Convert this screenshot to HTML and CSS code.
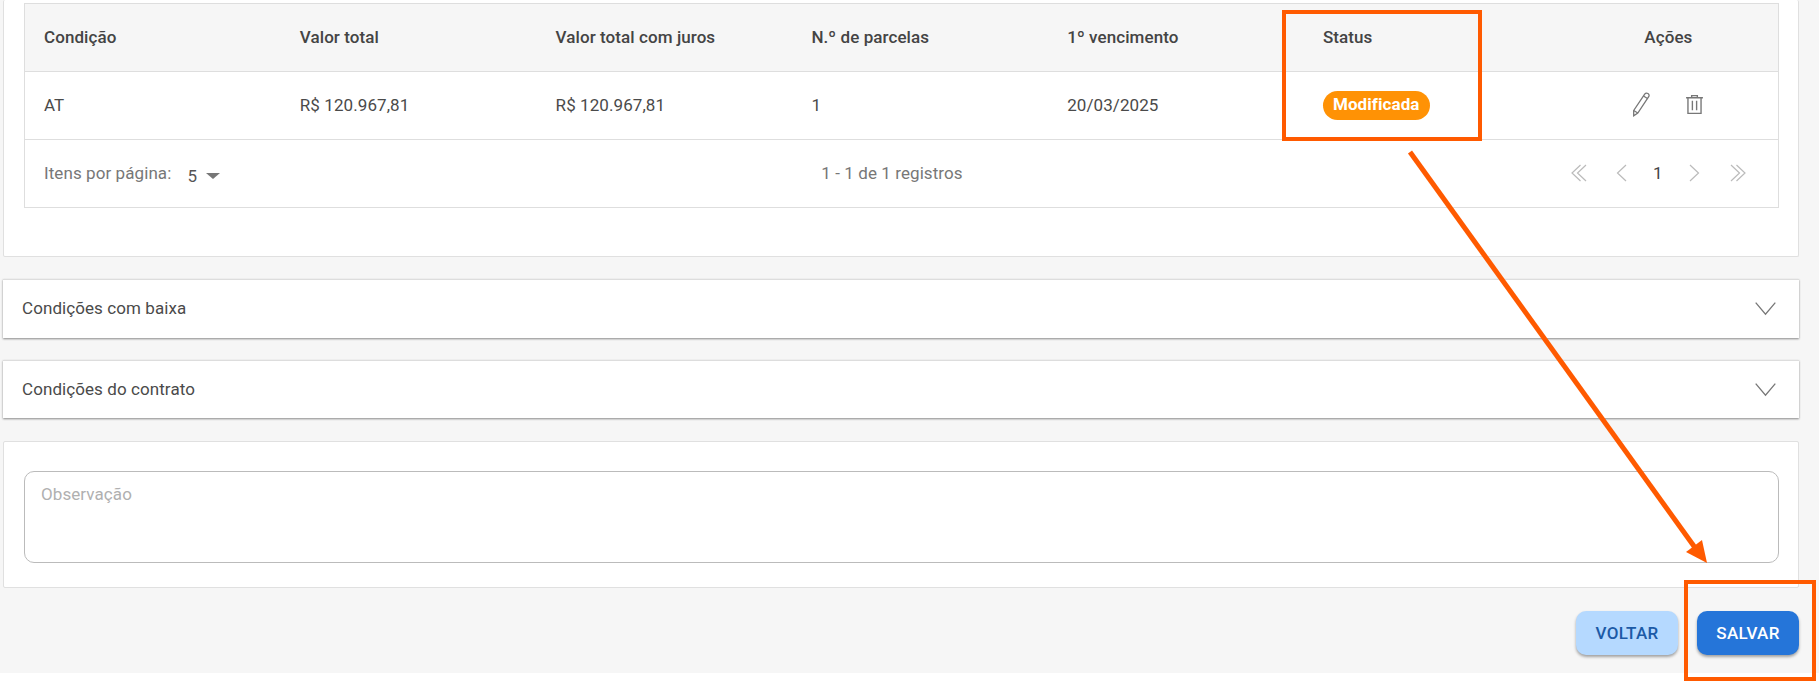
FILE: index.html
```html
<!DOCTYPE html>
<html lang="pt-BR">
<head>
<meta charset="utf-8">
<title>Condições</title>
<link rel="stylesheet" href="styles.css">
</head>
<body>
<main class="page">
  <section class="card card-table">
    <div class="table">
      <div class="row row-head">
        <div>Condição</div><div>Valor total</div><div>Valor total com juros</div><div>N.º de parcelas</div><div>1º vencimento</div><div>Status</div><div class="center">Ações</div>
      </div>
      <div class="row row-body">
        <div>AT</div><div>R$ 120.967,81</div><div>R$ 120.967,81</div><div>1</div><div>20/03/2025</div>
        <div><span class="badge">Modificada</span></div>
        <div class="actions">
          <svg class="icon-pencil" width="19" height="25" viewBox="0 0 18 25" fill="none" stroke="#777" stroke-width="1.3"><path d="M1.2 18.5 12.2 2.2c.8-1.1 2-1.4 3.2-.7 1.200.7 1.500 2 .8 3.100L5.300 21 1.200 23.800Z"/><path d="M1.200 18.500 5.300 21M11 4l4.300 2.800"/></svg>
          <svg class="icon-trash" width="17" height="19" viewBox="0 0 16 18" fill="none" stroke="#777" stroke-width="1.300"><path d="M0 2.600h16M5.300 2.600V.6h5.400v2M1.800 2.600v14.800h12.400V2.600M6 5.500v9M10 5.500v9"/></svg>
        </div>
      </div>
      <div class="pager">
        <div class="pager-size">
          <span>Itens por página:</span><span class="size-value">5</span><span class="caret"></span>
        </div>
        <div class="pager-info">1 - 1 de 1 registros</div>
        <div class="pager-nav">
          <svg width="16" height="18" viewBox="0 0 16 18" fill="none" stroke="#bbb" stroke-width="1.200"><path d="M9.500 1 1 9l8.500 8M15 1 6.500 9l8.500 8"/></svg>
          <svg class="nav-prev" width="11" height="18" viewBox="0 0 11 18" fill="none" stroke="#bbb" stroke-width="1.200"><path d="M10 1 1.500 9l8.500 8"/></svg>
          <span class="page-num">1</span>
          <svg class="nav-next" width="11" height="18" viewBox="0 0 11 18" fill="none" stroke="#bbb" stroke-width="1.200"><path d="m1 1 8.500 8L1 17"/></svg>
          <svg class="nav-last" width="16" height="18" viewBox="0 0 16 18" fill="none" stroke="#bbb" stroke-width="1.200"><path d="M1 1l8.500 8L1 17M6.500 1 15 9l-8.500 8"/></svg>
        </div>
      </div>
    </div>
  </section>

  <section class="panel panel-a">
    <span>Condições com baixa</span>
    <svg width="21" height="14" viewBox="0 0 21 14" fill="none" stroke="#777" stroke-width="1.300"><path d="m.7.7 9.800 11.500L20.300.7"/></svg>
  </section>
  <section class="panel panel-b">
    <span>Condições do contrato</span>
    <svg width="21" height="14" viewBox="0 0 21 14" fill="none" stroke="#777" stroke-width="1.300"><path d="m.7.7 9.800 11.500L20.300.7"/></svg>
  </section>

  <section class="card card-note">
    <div class="note">Observação</div>
  </section>

  <div class="buttons">
    <button class="btn btn-light" type="button">VOLTAR</button>
    <button class="btn btn-primary" type="button">SALVAR</button>
  </div>
</main>

<div class="mark mark-status"></div>
<div class="mark mark-save"></div>
<svg class="arrow" width="1819" height="681" viewBox="0 0 1819 681">
  <line x1="1410" y1="152" x2="1696" y2="549" stroke="#ff5a00" stroke-width="5"/>
  <polygon points="1707,563 1686,552 1702,540" fill="#ff5a00"/>
</svg>
</body>
</html>
```
FILE: styles.css
```css
* { box-sizing: border-box; }
html, body { margin: 0; padding: 0; }
body {
  width: 1819px;
  height: 681px;
  overflow: hidden;
  background: #fff;
  font-family: Roboto, "Liberation Sans", sans-serif;
  font-size: 17px;
  letter-spacing: .08px;
  color: #4a4a4a;
  position: relative;
}
.page {
  height: 673px;
  background: #f6f6f6;
  padding: 0 20px 0 3px;
  display: flex;
  flex-direction: column;
}
.card {
  background: #fff;
  border: 1px solid #e0e0e0;
  border-radius: 2px;
}
.card-table {
  height: 257px;
  border-top: 0;
  padding: 3px 19px 0 20px;
}
.table { border: 1px solid #dedede; }
.row {
  display: grid;
  grid-template-columns: repeat(6, 255.8px) 1fr;
  align-items: center;
  height: 68px;
  padding: 0 0 2px 19px;
  border-bottom: 1px solid #dedede;
}
.row-head { background: #f6f6f6; font-weight: 500; color: #444; }
.center { text-align: center; padding-right: 20px; }
.badge {
  display: inline-block;
  height: 29px;
  line-height: 27px;
  margin-top: 2px;
  padding: 0 10px;
  border-radius: 15px;
  background: #ff9205;
  color: #fff;
  font-weight: 700;
}
.actions { display: flex; align-items: center; padding-left: 53px; gap: 35px; }
.pager {
  height: 67px;
  display: flex;
  align-items: center;
  justify-content: space-between;
  padding: 0 32px 2px 19px;
  color: #777;
}
.pager-size { display: flex; align-items: center; width: 179px; white-space: nowrap; }
.size-value { color: #555; margin: 6px 0 0 16px; }
.caret {
  margin: 6px 0 0 9px;
  border-top: 6px solid #777;
  border-left: 7px solid transparent;
  border-right: 7px solid transparent;
}
.pager-info { margin-left: -10px; }
.pager-nav { display: flex; align-items: center; color: #444; }
.nav-prev { margin-left: 29px; }
.page-num { margin-left: 26px; width: 9px; }
.nav-next { margin-left: 27px; }
.nav-last { margin-left: 30px; }

.panel {
  background: #fff;
  height: 59px;
  margin-top: 22px;
  padding: 0 23px 2px 19px;
  display: flex;
  align-items: center;
  justify-content: space-between;
  border-top: 1px solid #ddd;
  box-shadow: 0 1px 2px rgba(0,0,0,.45);
}
.panel svg { margin-top: 2px; }
.panel-b { height: 58px; }
.card-note {
  height: 147px;
  margin-top: 23px;
  padding: 29px 19px 0 20px;
}
.note {
  height: 92px;
  border: 1px solid #bbb;
  border-radius: 10px;
  padding: 12px 16px;
  color: #b0b0b0;
}
.buttons {
  display: flex;
  justify-content: flex-end;
  gap: 19px;
  margin-top: 23px;
}
.btn {
  width: 102px;
  height: 44px;
  border: 0;
  border-radius: 10px;
  font-family: inherit;
  font-size: 17px;
  font-weight: 500;
  letter-spacing: .3px;
  box-shadow: 0 2px 3px rgba(0,0,0,.35);
}
.btn-light { background: #b5d9ff; color: #1c5aa6; }
.btn-primary { background: #2575d9; color: #fff; }

.mark { position: absolute; border: 4px solid #ff5a00; }
.mark-status { left: 1282px; top: 10px; width: 200px; height: 131px; }
.mark-save { left: 1684px; top: 580px; width: 132px; height: 101px; }
.arrow { position: absolute; left: 0; top: 0; pointer-events: none; }
```
